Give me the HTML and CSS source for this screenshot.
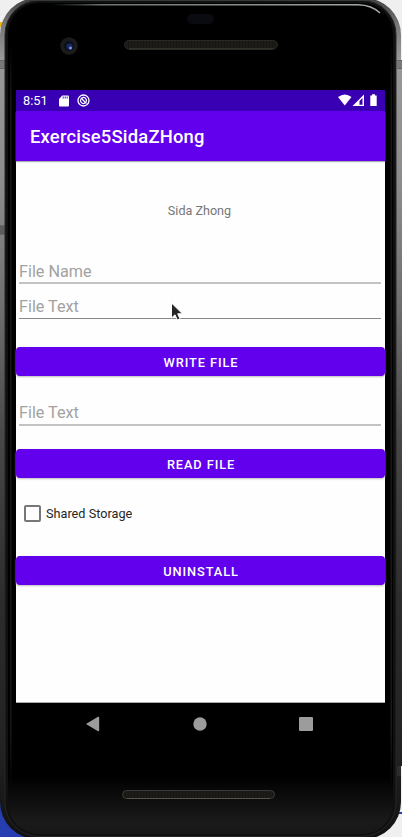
FILE: index.html
```
<!DOCTYPE html>
<html lang="en">
<head>
<meta charset="utf-8">
<title>Exercise5SidaZHong</title>
<link rel="stylesheet" href="styles.css">
</head>
<body>
<main class="device">
  <svg class="frame" width="402" height="837" viewBox="0 0 402 837" aria-hidden="true">
    <defs>
      <linearGradient id="metal" gradientUnits="userSpaceOnUse" x1="0" x2="0" y1="0" y2="837">
        <stop offset="0" stop-color="#444"/><stop offset=".03" stop-color="#777"/><stop offset=".07" stop-color="#999"/><stop offset=".22" stop-color="#8c8c8c"/><stop offset=".36" stop-color="#707070"/><stop offset=".52" stop-color="#484848"/><stop offset=".72" stop-color="#2c2c2c"/><stop offset=".9" stop-color="#222"/><stop offset="1" stop-color="#111"/>
      </linearGradient>
      <linearGradient id="chin" x2="0" y2="1">
        <stop offset="0" stop-color="#000"/><stop offset=".93" stop-color="#000"/><stop offset=".985" stop-color="#1a1a1a"/><stop offset="1" stop-color="#171717"/>
      </linearGradient>
      <linearGradient id="shine" gradientUnits="userSpaceOnUse" x1="52" x2="380" y1="0" y2="0">
        <stop offset="0" stop-color="#566" stop-opacity="0"/><stop offset=".15" stop-color="#6c7474"/><stop offset=".85" stop-color="#98a19e"/><stop offset="1" stop-color="#a8b0ac"/>
      </linearGradient>
      <linearGradient id="edge" gradientUnits="userSpaceOnUse" x1="0" x2="0" y1="40" y2="790">
        <stop offset="0" stop-color="#181818" stop-opacity="0"/><stop offset=".08" stop-color="#181818"/><stop offset=".92" stop-color="#181818"/><stop offset="1" stop-color="#181818" stop-opacity="0"/>
      </linearGradient>
      <pattern id="mesh" width="3" height="8" patternUnits="userSpaceOnUse">
        <path fill="#171614" d="M0 0h3v8H0z"/><path stroke="#25221e" d="M1 0v8"/>
      </pattern>
    </defs>
    <path fill="#efefef" d="M0 0h402v837H0z"/>
    <path fill="#efb300" d="M0 22h4v5H0z"/>
    <path fill="#263eaf" d="M0 800h35v37H0z"/>
    <path fill="#263eaf" d="M396 812h6v2h-6z"/>
    <rect x="0" y="-2" width="401" height="841" rx="37" fill="url(#metal)"/>
    <path fill="url(#metal)" d="M400 60h2V766h-2z"/>
    <path fill="#777" d="M0 60h5v9H0zM397 60h5v9h-5z"/>
    <path fill="#5c5c5c" d="M0 225h5v10H0z"/>
    <path stroke="#666" d="M0 60.500h5M0 68.500h5M397 60.500h5M397 68.500h5M0 225.500h5M0 234.500h5"/>
    <path fill="#2d2d2d" d="M397 766h4v10h-4z"/>
    <rect x="5" y=".5" width="391" height="836" rx="34" fill="#101010" stroke="#262626"/>
    <rect x="8" y="3" width="385" height="831" rx="31" fill="url(#chin)"/>
    <rect x="10" y="40" width="1.500" height="750" fill="url(#edge)"/>
    <rect x="390.500" y="40" width="1.500" height="750" fill="url(#edge)"/>
    <path fill="none" stroke="url(#shine)" stroke-width="1.400" d="M52 4.700H358Q372 5 380 13"/>
    <path stroke="#353939" d="M30 .5H370"/>
    <rect x="187" y="14" width="27" height="10" rx="5" fill="#090b10"/>
    <circle cx="69" cy="46" r="8.700" fill="#1b1b1c"/>
    <circle cx="69" cy="46" r="5" fill="#0b1020"/>
    <circle cx="69.500" cy="46.500" r="3" fill="#1d2a60"/>
    <circle cx="70.500" cy="48" r="1.500" fill="#7c8fe0"/>
    <rect x="124.500" y="40.500" width="153" height="8.500" rx="4.200" fill="url(#mesh)" stroke="#292826"/>
    <path stroke="#454039" d="M129 49H273"/>
    <rect x="122.500" y="790.500" width="152" height="8" rx="4" fill="url(#mesh)" stroke="#3a3a39"/>
    <path stroke="#555550" d="M127 798.500H270"/>
  </svg>

  <section class="screen">
    <header class="status">
      <span class="clock">8:51</span>
      <svg class="card" width="10" height="12" viewBox="0 0 10 12"><path fill="#fff" d="M3.300.5H9q1 0 1 1v9q0 1-1 1H1q-1 0-1-1V4z"/><path stroke="#3900b3" stroke-width=".9" d="M4.200 1.500v2M6.200 1.500v2M8.200 1.500v2"/></svg>
      <svg class="sync" width="13" height="13" viewBox="0 0 13 13" fill="none" stroke="#fff"><circle cx="6.500" cy="6.500" r="5.500" stroke-width="1.300"/><path stroke-width="1.300" d="M3.800 5.200A3 3 0 0 0 7.800 9.200M5.200 3.800A3 3 0 0 1 9.200 7.800M3.800 3.800L9.500 9.500"/></svg>
      <svg class="signals" width="40" height="13" viewBox="0 0 40 13" fill="#fff"><path d="M0 3Q7-2 13.500 3L6.750 11.500z"/><path fill-rule="evenodd" d="M14.500 12L26 .5V12zM21.500 7v3.700h3V3.900z"/><path d="M34 .3h3v1.200h1.700V12H32.300V1.500H34z"/></svg>
    </header>
    <h1 class="appbar">Exercise5SidaZHong</h1>
    <div class="content">
      <p class="name">Sida Zhong</p>
      <div class="field field-name">File Name</div>
      <div class="field field-text">File Text</div>
      <button class="button">WRITE FILE</button>
      <div class="field field-read">File Text</div>
      <button class="button">READ FILE</button>
      <label class="check"><span class="box"></span>Shared Storage</label>
      <button class="button">UNINSTALL</button>
    </div>
  </section>
  <nav class="nav">
    <svg width="14" height="16" viewBox="0 0 14 16"><path fill="#9c9c9c" d="M0 8L12 .8Q13.200.5 13.200 1.800V14.200Q13.200 15.500 12 15.200z"/></svg>
    <svg width="14" height="14" viewBox="0 0 14 14"><circle cx="7" cy="7" r="6.700" fill="#9c9c9c"/></svg>
    <svg width="14" height="14" viewBox="0 0 14 14"><rect width="14" height="14" rx="1" fill="#9c9c9c"/></svg>
  </nav>
  <svg class="cursor" width="14" height="21" viewBox="0 0 14 21"><path fill="#252525" stroke="#fff" stroke-width="1" d="M1.500 1V16L5 12.800L7.300 18L10 16.800L7.700 11.800H12.500z"/></svg>
</main>
</body>
</html>
```
FILE: styles.css
```
* { box-sizing: border-box; }
body { margin: 0; font-family: Roboto, sans-serif; overflow: hidden; }
.device { position: relative; width: 402px; height: 837px; padding: 90px 17px 0 16px; }
.frame { position: absolute; inset: 0; z-index: -1; }
.screen { height: 613px; display: flex; flex-direction: column; background: #fefefe; border-bottom: 1px solid #aaa; }
.status { height: 21px; flex: none; display: flex; align-items: center; padding: 0 7px; background: #3900b3; color: #fff; }
.clock { width: 36px; font-size: 12.8px; line-height: 22px; }
.sync { margin-left: 8px; }
.signals { margin-left: auto; }
.appbar { height: 50px; flex: none; margin: 0; padding: 1px 14px 0; background: #6200ee; color: #fff; font-size: 18.4px; font-weight: 500; letter-spacing: .2px; line-height: 49px; box-shadow: 0 1px 1px #aaa; }
.content { display: flex; flex-direction: column; }
.name { margin: 41px 0 0; padding-right: 2px; color: #777; text-align: center; font-size: 12.6px; line-height: 18px; }
.field { height: 24px; margin: 0 4px 0 3px; color: #a2a2a2; border-bottom: 1px solid #888; font-size: 16.2px; line-height: 23px; }
.field-name { margin-top: 40px; border-bottom: 2px solid #c3c3c3; }
.field-text { margin-top: 11px; margin-bottom: 28px; }
.button { height: 29px; margin: 0; padding: 1px 0 0 1px; border: 0; border-radius: 4px; background: #6200ee; color: #fff; font: 500 12.8px/29px Roboto, sans-serif; letter-spacing: .9px; text-align: center; box-shadow: 0 1px 2px #bbb; }
.field-read { margin-top: 26px; margin-bottom: 23px; border-bottom: 2px solid #c3c3c3; line-height: 22px; }
.check { display: flex; align-items: center; height: 18px; margin: 26px 0 34px 7.5px; color: #262626; font-size: 12.7px; }
.box { width: 17px; height: 17px; margin-right: 5.5px; border: 2px solid #777; border-radius: 2px; }
.nav { display: flex; align-items: center; justify-content: space-between; height: 42px; padding: 0 72px 0 70px; }
.cursor { position: absolute; left: 170px; top: 302px; }
```
